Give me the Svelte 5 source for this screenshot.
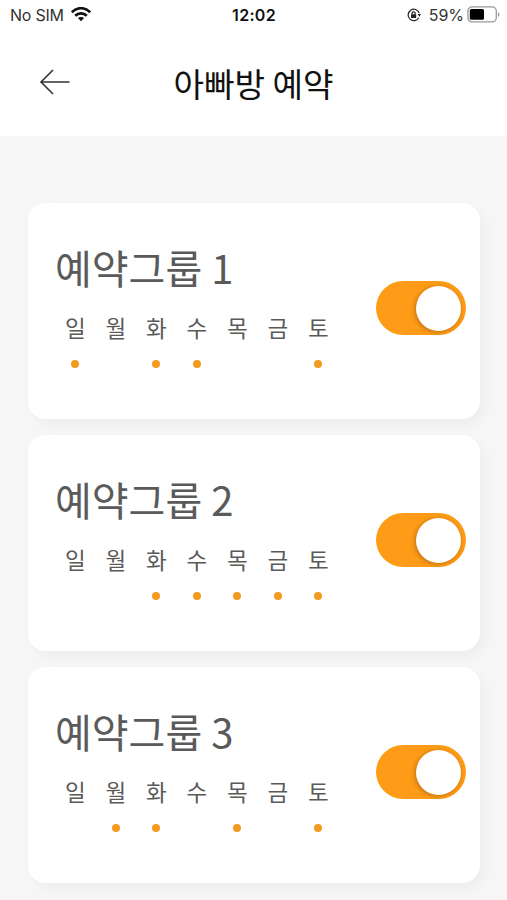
<script>
  const days = ['일', '월', '화', '수', '목', '금', '토'];
  let groups = $state([
    { name: '예약그룹 1', active: [0, 2, 3, 6], on: true },
    { name: '예약그룹 2', active: [2, 3, 4, 5, 6], on: true },
    { name: '예약그룹 3', active: [1, 2, 4, 6], on: true }
  ]);
</script>

<div class="screen">
  <div class="status">
    <div class="side left">
      <span class="carrier">No SIM</span>
      <svg class="wifi" width="20" height="15" viewBox="0 0 20 15" fill="none" stroke="#111" stroke-width="2.7">
        <path d="M.9 5.3C6-.2 14-.2 19.1 5.3" />
        <path d="M4.2 8.8c3.3-3.3 8.3-3.3 11.6 0" />
        <path d="M10 14.2 6.9 11.1c1.8-1.5 4.4-1.5 6.2 0Z" fill="#111" stroke="none" />
      </svg>
    </div>
    <span class="clock">12:02</span>
    <div class="side right">
      <svg width="14" height="14" viewBox="0 0 14 14" fill="none" stroke="#222" stroke-width="1.2">
        <path d="M11.8 9.7A5.7 5.7 0 1 1 12.2 5" />
        <path d="m10.6 6 3.3 0-1.5 2.8Z" fill="#222" stroke="none" />
        <rect x="4" y="6.2" width="5.2" height="3.9" rx=".6" fill="#222" stroke="none" />
        <path d="M5 6.5V5.4a1.6 1.6 0 0 1 3.2 0v1.1" />
      </svg>
      <span class="percent">59%</span>
      <svg class="battery" width="33" height="17" viewBox="0 0 33 17">
        <rect x=".9" y=".9" width="28.4" height="15" rx="4.2" fill="#fff" stroke="#999" stroke-width="1.3" />
        <rect x="2.8" y="3" width="14.2" height="10.8" rx="1.5" fill="#000" />
        <path d="M31 6v5c1.8-.7 1.8-4.3 0-5Z" fill="#999" />
      </svg>
    </div>
  </div>

  <header>
    <button class="back" aria-label="뒤로">
      <svg width="32" height="28" viewBox="0 0 32 28" fill="none" stroke="#333" stroke-width="1.6">
        <path d="M30.5 14H2.5M14 2 2 14l12 12" />
      </svg>
    </button>
    <h1>아빠방 예약</h1>
  </header>

  <main>
    {#each groups as group}
      <section class="card">
        <div class="info">
          <h2>{group.name}</h2>
          <div class="days">
            {#each days as day, i}
              <div class="day">
                <span>{day}</span>
                <i class:active={group.active.includes(i)}></i>
              </div>
            {/each}
          </div>
        </div>
        <button
          class="toggle"
          class:on={group.on}
          role="switch"
          aria-checked={group.on}
          aria-label={group.name}
          onclick={() => (group.on = !group.on)}
        ><span class="knob"></span></button>
      </section>
    {/each}
  </main>
</div>

<style>
  .screen {
    width: 507px;
    height: 900px;
    overflow: hidden;
    background: #f6f6f6;
    font-family: "Noto Sans CJK KR", sans-serif;
    display: flex;
    flex-direction: column;
  }
  button {
    border: 0;
    padding: 0;
    background: none;
  }
  svg {
    display: block;
  }
  .status {
    height: 29px;
    flex: none;
    box-sizing: border-box;
    padding: 0 7px 0 10px;
    background: #fff;
    display: flex;
    align-items: center;
    font-family: Inter, sans-serif;
    font-size: 16px;
    color: #333;
  }
  .side {
    flex: 1;
    display: flex;
    align-items: center;
  }
  .carrier {
    letter-spacing: -0.25px;
  }
  .wifi {
    margin-left: 7px;
  }
  .clock {
    margin-right: 2px;
    font-weight: 600;
    color: #111;
    letter-spacing: 0.3px;
  }
  .right {
    justify-content: flex-end;
  }
  .percent {
    margin: 0 3px 0 8px;
  }
  header {
    height: 107px;
    flex: none;
    background: #fff;
    display: grid;
    grid-template-columns: 110px 1fr 110px;
  }
  .back {
    margin: 39px 0 0 39px;
    width: 32px;
    height: 28px;
  }
  h1 {
    margin: 29px 0 0;
    font-size: 33.2px;
    font-weight: 400;
    line-height: 50px;
    text-align: center;
    color: #111;
    white-space: nowrap;
  }
  main {
    padding: 67px 27px 0 28px;
    display: flex;
    flex-direction: column;
    gap: 16.5px;
  }
  .card {
    height: 215.5px;
    flex: none;
    box-sizing: border-box;
    padding: 0 14px 0 27px;
    border-radius: 18px;
    background: #fff;
    box-shadow: 5px 6px 12px rgba(0, 0, 0, 0.035);
    display: flex;
    justify-content: space-between;
  }
  h2 {
    margin: 34px 0 0;
    font-size: 40px;
    font-weight: 400;
    line-height: 60px;
    color: #5a5a5a;
  }
  .days {
    display: flex;
    margin-top: 13px;
  }
  .day {
    width: 40.5px;
    display: flex;
    flex-direction: column;
    align-items: center;
    font-size: 22.5px;
    line-height: 34px;
    color: #5a5a5a;
  }
  .day i {
    width: 8px;
    height: 8px;
    margin-top: 15.5px;
    border-radius: 50%;
  }
  .day i.active {
    background: #f29b20;
  }
  .toggle {
    width: 90px;
    height: 54px;
    margin-top: 78px;
    padding: 0 5px;
    border-radius: 27px;
    background: #ccc;
    display: flex;
    align-items: center;
  }
  .toggle.on {
    background: #ff9c17;
    justify-content: flex-end;
  }
  .knob {
    width: 45px;
    height: 45px;
    border-radius: 50%;
    background: #fff;
    box-shadow: -1px 1px 5px rgba(70, 40, 0, 0.4);
  }
</style>
